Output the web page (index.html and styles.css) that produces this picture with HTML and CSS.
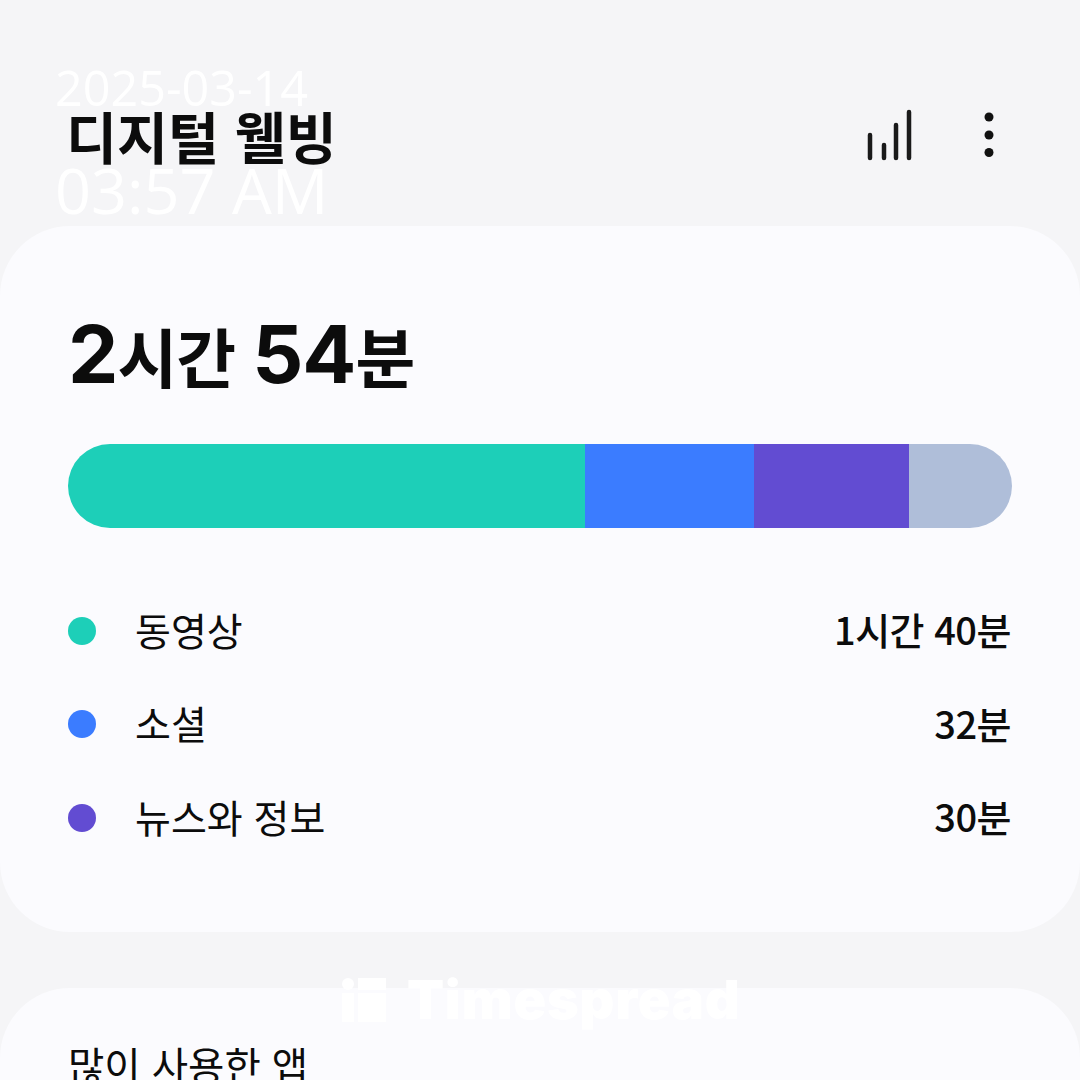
FILE: index.html
```html
<!DOCTYPE html>
<html lang="ko">
<head>
  <meta charset="utf-8">
  <title>디지털 웰빙</title>
  <link rel="stylesheet" href="styles.css">
</head>
<body>
  <header class="top">
    <h1 class="title">디지털 웰빙</h1>
    <div class="top-icons">
      <svg class="icon-chart" width="48" height="54" viewBox="0 0 48 54">
        <path d="M4 27V50M18 37V50M30 17V50M43 4V50" fill="none" stroke="#1a1a1a" stroke-width="4.500" stroke-linecap="round"/>
      </svg>
      <svg class="icon-more" width="12" height="50" viewBox="0 0 12 50">
        <circle cx="6" cy="7" r="4.500" fill="#111"/>
        <circle cx="6" cy="25" r="4.500" fill="#111"/>
        <circle cx="6" cy="42.500" r="4.500" fill="#111"/>
      </svg>
    </div>
  </header>

  <section class="card usage">
    <p class="total"><b>2</b>시간 <b>54</b>분</p>
    <div class="bar">
      <span class="seg teal"></span>
      <span class="seg blue"></span>
      <span class="seg purple"></span>
      <span class="seg gray"></span>
    </div>
    <ul class="legend">
      <li class="row"><i class="dot teal"></i><span class="name">동영상</span><span class="time">1시간 40분</span></li>
      <li class="row"><i class="dot blue"></i><span class="name">소셜</span><span class="time">32분</span></li>
      <li class="row"><i class="dot purple"></i><span class="name">뉴스와 정보</span><span class="time">30분</span></li>
    </ul>
  </section>

  <section class="card apps">
    <h2 class="apps-title">많이 사용한 앱</h2>
  </section>

  <!-- 워터마크 -->
  <div class="stamp stamp-date">2025-03-14</div>
  <div class="stamp stamp-time">03:57 AM</div>
  <div class="brand">
    <svg width="44" height="44" viewBox="0 0 44 44">
      <circle cx="6" cy="6" r="6" fill="#fff"/>
      <rect x="0" y="15" width="12" height="29" fill="#fff"/>
      <rect x="16" y="0" width="28" height="12" fill="#fff"/>
      <rect x="16" y="15" width="28" height="29" fill="#fff"/>
    </svg>
    <span>Timespread</span>
  </div>
</body>
</html>
```

FILE: styles.css
```css
* {
  box-sizing: border-box;
}

html {
  height: 100%;
  overflow: hidden;
}

body {
  margin: 0;
  height: 1080px;
  overflow: hidden;
  position: relative;
  background-color: #f5f5f7;
  color: #0c0c0c;
  font-family: "Noto Sans CJK KR", "Noto Sans", sans-serif;
}

/* 상단 */
.top {
  height: 226px;
  padding: 100px 68px 0 66px;
  display: flex;
  justify-content: space-between;
  align-items: flex-start;
}

.title {
  margin: 0;
  font-size: 55.500px;
  line-height: 70px;
  font-weight: 700;
}

.top-icons {
  display: flex;
  align-items: center;
  gap: 69px;
  padding: 8px 17px 0 0;
}

/* 카드 */
.card {
  background-color: #fbfbfe;
  border-radius: 70px;
}

.usage {
  height: 706px;
  padding: 82px 68px 0 68px;
}

.total {
  margin: 0;
  font-size: 65px;
  line-height: 92px;
  font-weight: 700;
  letter-spacing: -1px;
}

.total b {
  font-family: "Inter", sans-serif;
  font-size: 80px;
  font-weight: 700;
  letter-spacing: -1px;
}

.bar {
  display: flex;
  height: 84px;
  margin-top: 43px;
  border-radius: 42px;
  overflow: hidden;
}

.seg.teal { width: 517px; }
.seg.blue { width: 169px; }
.seg.purple { width: 155px; }
.seg.gray { width: 103px; }

.teal { background-color: #1dcfb8; }
.blue { background-color: #3b7cff; }
.purple { background-color: #624cd2; }
.gray { background-color: #afbed9; }

.legend {
  list-style: none;
  margin: 56px 0 0 0;
  padding: 0;
}

.row {
  display: flex;
  align-items: center;
  height: 93.500px;
  font-size: 39px;
}

.dot {
  width: 28px;
  height: 28px;
  border-radius: 50%;
  margin-right: 39px;
}

.name {
  flex: 1;
  padding-bottom: 4px;
}

.time {
  font-size: 38px;
  font-weight: 500;
  letter-spacing: -0.500px;
  margin-right: 1px;
  padding-bottom: 4px;
}

/* 많이 사용한 앱 */
.apps {
  margin-top: 56px;
  height: 300px;
  padding: 48px 68px 0 68px;
}

.apps-title {
  margin: 0;
  font-size: 39.500px;
  line-height: 56px;
  font-weight: 400;
}

/* 워터마크 */
.stamp {
  position: absolute;
  left: 55px;
  color: #fff;
  font-family: "Open Sans", sans-serif;
  font-weight: 400;
  white-space: nowrap;
}

.stamp-date {
  top: 57px;
  font-size: 48.500px;
  line-height: 60px;
}

.stamp-time {
  top: 151px;
  font-size: 63px;
  line-height: 78px;
}

.brand {
  position: absolute;
  left: 342px;
  top: 978px;
  display: flex;
  align-items: center;
  gap: 21px;
  color: #fff;
  font-family: "Inter", sans-serif;
  font-size: 54px;
  line-height: 44px;
  font-weight: 900;
  letter-spacing: 0.800px;
}
```
